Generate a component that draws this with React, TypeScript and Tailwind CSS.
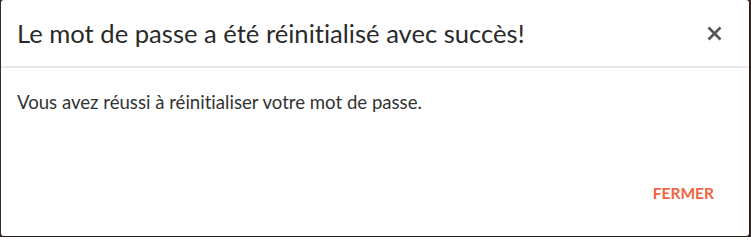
import React from "react";

export default function App() {
  return (
    <div className="w-[751px] h-[237px] bg-[#3a2a26] flex [font-variant-ligatures:none]" style={{ fontFamily: "Lato, 'Noto Sans', sans-serif" }}>
      <div className="ml-[1px] mr-[2px] mb-[1px] flex-1 bg-white rounded-[3px] flex flex-col shadow-[1px_1px_2px_rgba(0,0,0,0.35)]">
        <div className="h-[68px] border-b-2 border-[#e8e8e8] flex items-center justify-between pl-[16px] pr-[27px]">
          <h1 className="text-[25.6px] font-normal text-[#2a2a2a] leading-none pt-[1px]">Le mot de passe a été réinitialisé avec succès!</h1>
          <svg width="15" height="15" viewBox="0 0 15 15" className="mt-[1px]">
            <path d="M1.5 1.5 L13.5 13.5 M13.5 1.5 L1.5 13.5" stroke="#555" strokeWidth="2.6" strokeLinecap="butt" />
          </svg>
        </div>
        <div className="pl-[16px] pt-[22px] text-[18.6px] text-[#333] leading-[24px]">
          Vous avez réussi à réinitialiser votre mot de passe.
        </div>
        <div className="flex-1 flex items-end justify-end pr-[35px] pb-[35px]">
          <button className="text-[15.5px] font-bold text-[#f06442] leading-none">FERMER</button>
        </div>
      </div>
    </div>
  );
}
